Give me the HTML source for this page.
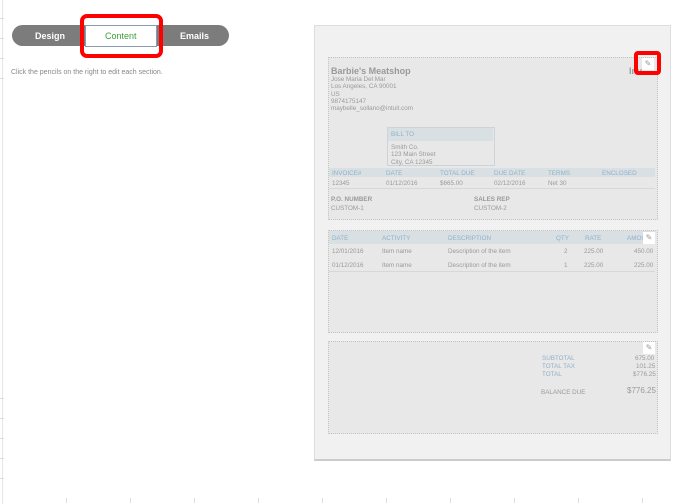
<!DOCTYPE html><html><head><style>
body{margin:0;width:685px;height:504px;background:#fff;font-family:"Liberation Sans",sans-serif;position:relative;overflow:hidden}
.a{position:absolute}
.t{position:absolute;font-size:6.3px;color:#9a9a9a;white-space:nowrap}
.h{color:#8fb0c8}
.dot{position:absolute;border:1px dotted #c4c4c4}
.pen{position:absolute;width:12px;height:12px;background:#fff;font-size:8px;color:#999;text-align:center;line-height:12px}
.tk{position:absolute;top:498px;width:1px;height:5px;background:#ddd}
.lk{position:absolute;left:0;width:4px;height:1px;background:#ddd}
</style></head><body>
<div class="a" style="left:2px;top:0;width:1px;height:504px;background:#e6e6e6"></div>
<div class="lk" style="top:18px"></div><div class="lk" style="top:38px"></div><div class="lk" style="top:58px"></div><div class="lk" style="top:78px"></div><div class="lk" style="top:398px"></div><div class="lk" style="top:418px"></div><div class="lk" style="top:438px"></div><div class="lk" style="top:458px"></div><div class="lk" style="top:478px"></div>
<div class="tk" style="left:66px"></div><div class="tk" style="left:130px"></div><div class="tk" style="left:194px"></div><div class="tk" style="left:258px"></div><div class="tk" style="left:322px"></div><div class="tk" style="left:386px"></div><div class="tk" style="left:450px"></div><div class="tk" style="left:514px"></div><div class="tk" style="left:578px"></div><div class="tk" style="left:642px"></div>
<div class="a" style="left:12px;top:25px;width:217px;height:21px;border-radius:11px;background:#7c7c7c"></div>
<div class="t" style="left:35px;top:31px;font-size:9px;color:#fff;font-weight:bold">Design</div>
<div class="t" style="left:180px;top:31px;font-size:9px;color:#fff;font-weight:bold">Emails</div>
<div class="a" style="left:85px;top:25px;width:70px;height:20px;background:#fff;border:1px solid #8a9ab0"></div>
<div class="t" style="left:105px;top:31px;font-size:9px;color:#3aa335">Content</div>
<div class="a" style="left:80px;top:14px;width:75px;height:36px;border:4px solid #f00;border-radius:7px"></div>
<div class="t" style="left:11px;top:69px;font-size:7px;color:#888">Click the pencils on the right to edit each section.</div>

<div class="a" style="left:314px;top:25px;width:355px;height:433px;background:#f1f1f1;border:1px solid #ddd;border-bottom:2px solid #ccc"></div>
<div class="dot" style="left:328px;top:57px;width:328px;height:161px;background:#e8e8e8"></div>
<div class="t" style="left:331px;top:66px;font-size:9px;font-weight:bold;color:#999">Barbie's Meatshop</div>
<div class="t" style="left:331px;top:76px;line-height:7.3px">Jose Maria Del Mar<br>Los Angeles, CA 90001<br>US<br>9874175147<br>maybelle_sollano@intuit.com</div>
<div class="t" style="left:629px;top:66px;font-size:9px;font-weight:bold;color:#999">Inv</div>
<div class="pen" style="left:642px;top:58px">✎</div>
<div class="a" style="left:634px;top:51px;width:27px;height:24px;border:4px solid #f00;border-radius:4px;box-sizing:border-box"></div>
<div class="a" style="left:387px;top:127px;width:106px;height:37px;border:1px solid #ccd4da;background:#e8e8e8"></div>
<div class="a" style="left:388px;top:128px;width:105px;height:13px;background:#d9e0e4"></div>
<div class="t h" style="left:391px;top:131px">BILL TO</div>
<div class="t" style="left:391px;top:144px;line-height:7.3px">Smith Co.<br>123 Main Street<br>City, CA 12345</div>
<div class="a" style="left:329px;top:168px;width:326px;height:9px;background:#d9e0e4"></div>
<div class="a" style="left:329px;top:177px;width:326px;height:11px;border-bottom:1px solid #d8d8d8"></div>
<div class="t h" style="left:332px;top:170px">INVOICE#</div><div class="t h" style="left:386px;top:170px">DATE</div><div class="t h" style="left:440px;top:170px">TOTAL DUE</div><div class="t h" style="left:494px;top:170px">DUE DATE</div><div class="t h" style="left:548px;top:170px">TERMS</div><div class="t h" style="left:602px;top:170px">ENCLOSED</div>
<div class="t" style="left:332px;top:180px">12345</div><div class="t" style="left:386px;top:180px">01/12/2016</div><div class="t" style="left:440px;top:180px">$665.00</div><div class="t" style="left:494px;top:180px">02/12/2016</div><div class="t" style="left:548px;top:180px">Net 30</div>
<div class="t" style="left:331px;top:196px;font-weight:bold">P.O. NUMBER</div><div class="t" style="left:331px;top:205px">CUSTOM-1</div>
<div class="t" style="left:474px;top:196px;font-weight:bold">SALES REP</div><div class="t" style="left:474px;top:205px">CUSTOM-2</div>

<div class="dot" style="left:328px;top:230px;width:328px;height:101px;background:#e8e8e8"></div>
<div class="a" style="left:329px;top:231px;width:326px;height:13px;background:#d9e0e4"></div>
<div class="a" style="left:329px;top:271px;width:326px;height:1px;background:#d8d8d8"></div>
<div class="t h" style="left:332px;top:235px">DATE</div><div class="t h" style="left:382px;top:235px">ACTIVITY</div><div class="t h" style="left:448px;top:235px">DESCRIPTION</div><div class="t h" style="left:556px;top:235px">QTY</div><div class="t h" style="left:585px;top:235px">RATE</div><div class="t h" style="left:627px;top:235px">AMOU</div>
<div class="pen" style="left:643px;top:232px">✎</div>
<div class="t" style="left:332px;top:248px">12/01/2016</div><div class="t" style="left:382px;top:248px">Item name</div><div class="t" style="left:448px;top:248px">Description of the item</div><div class="t" style="left:564px;top:248px">2</div><div class="t" style="left:584px;top:248px">225.00</div><div class="t" style="left:634px;top:248px">450.00</div>
<div class="t" style="left:332px;top:262px">01/12/2016</div><div class="t" style="left:382px;top:262px">Item name</div><div class="t" style="left:448px;top:262px">Description of the item</div><div class="t" style="left:564px;top:262px">1</div><div class="t" style="left:584px;top:262px">225.00</div><div class="t" style="left:634px;top:262px">225.00</div>

<div class="dot" style="left:328px;top:341px;width:328px;height:91px;background:#e8e8e8"></div>
<div class="t" style="left:635px;top:355px">675.00</div>
<div class="pen" style="left:643px;top:342px">✎</div>
<div class="t h" style="left:542px;top:355px">SUBTOTAL</div>
<div class="t h" style="left:542px;top:363px">TOTAL TAX</div><div class="t" style="left:636px;top:363px">101.25</div>
<div class="t h" style="left:542px;top:371px">TOTAL</div><div class="t" style="left:633px;top:371px">$776.25</div>
<div class="t" style="left:541px;top:389px">BALANCE DUE</div><div class="t" style="left:627px;top:386px;font-size:8px">$776.25</div>
</body></html>
